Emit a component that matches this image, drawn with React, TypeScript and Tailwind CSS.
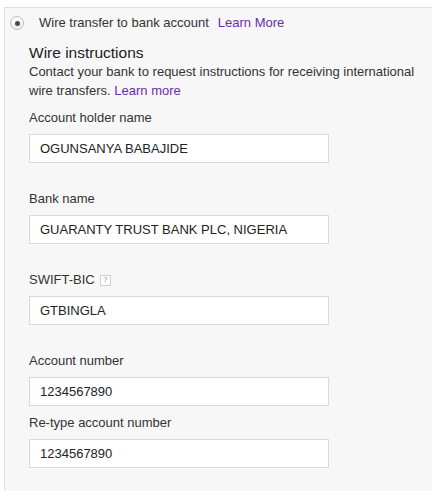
import React from "react";

type Field = {
  label: string;
  value: string;
  help?: boolean;
  tight?: boolean;
};

const fields: Field[] = [
  { label: "Account holder name", value: "OGUNSANYA BABAJIDE" },
  { label: "Bank name", value: "GUARANTY TRUST BANK PLC, NIGERIA" },
  { label: "SWIFT-BIC", value: "GTBINGLA", help: true },
  { label: "Account number", value: "1234567890" },
  { label: "Re-type account number", value: "1234567890", tight: true },
];

function Radio({ checked }: { checked: boolean }) {
  return (
    <span className="mt-[0px] flex h-[14px] w-[14px] shrink-0 items-center justify-center rounded-full border border-[#bdbdbd] bg-gradient-to-b from-white to-[#ececec]">
      {checked && <span className="h-[5px] w-[5px] rounded-full bg-[#4a4a4a]" />}
    </span>
  );
}

function FieldRow({ field, first }: { field: Field; first: boolean }) {
  const spacing = first ? "mt-[10px]" : field.tight ? "mt-[9px]" : "mt-[28px]";
  return (
    <div className={spacing}>
      <label className="mb-[8px] flex items-center text-[13px] leading-[16px] text-[#333]">
        {field.label}
        {field.help && (
          <span className="ml-[5px] flex h-[11px] w-[11px] items-center justify-center border border-[#cfcfcf] bg-white text-[8px] leading-none text-[#999]">
            ?
          </span>
        )}
      </label>
      <input
        readOnly
        defaultValue={field.value}
        className="block h-[29px] w-[300px] border border-[#d9d9d9] bg-white px-[10px] text-[13px] leading-[16px] text-[#222] outline-none"
      />
    </div>
  );
}

export default function App() {
  return (
    <div className="min-h-screen bg-white pl-[4px] pt-[7px] font-['Liberation_Sans',Arial,sans-serif]">
      <div className="border-l border-t border-[#e0e0e0] bg-[#f7f7f7] pb-[30px]">
        {/* Payment option header */}
        <div className="flex items-start pl-[5px] pt-[7px]">
          <span className="mt-[1px]">
            <Radio checked />
          </span>
          <span className="ml-[15px] text-[13px] leading-[16px] text-[#333]">
            Wire transfer to bank account
          </span>
          <a href="#" className="ml-[9px] text-[13px] leading-[16px] text-[#6c2bb0]">
            Learn More
          </a>
        </div>

        <div className="pl-[24px]">
          <h2 className="mt-[12px] text-[15.5px] leading-[19px] text-[#222]">Wire instructions</h2>
          <p className="text-[13px] leading-[19px] text-[#333]">
            Contact your bank to request instructions for receiving international wire transfers.{" "}
            <a href="#" className="text-[#6c2bb0]">
              Learn more
            </a>
          </p>

          {fields.map((f, i) => (
            <FieldRow key={f.label} field={f} first={i === 0} />
          ))}
        </div>
      </div>
    </div>
  );
}
